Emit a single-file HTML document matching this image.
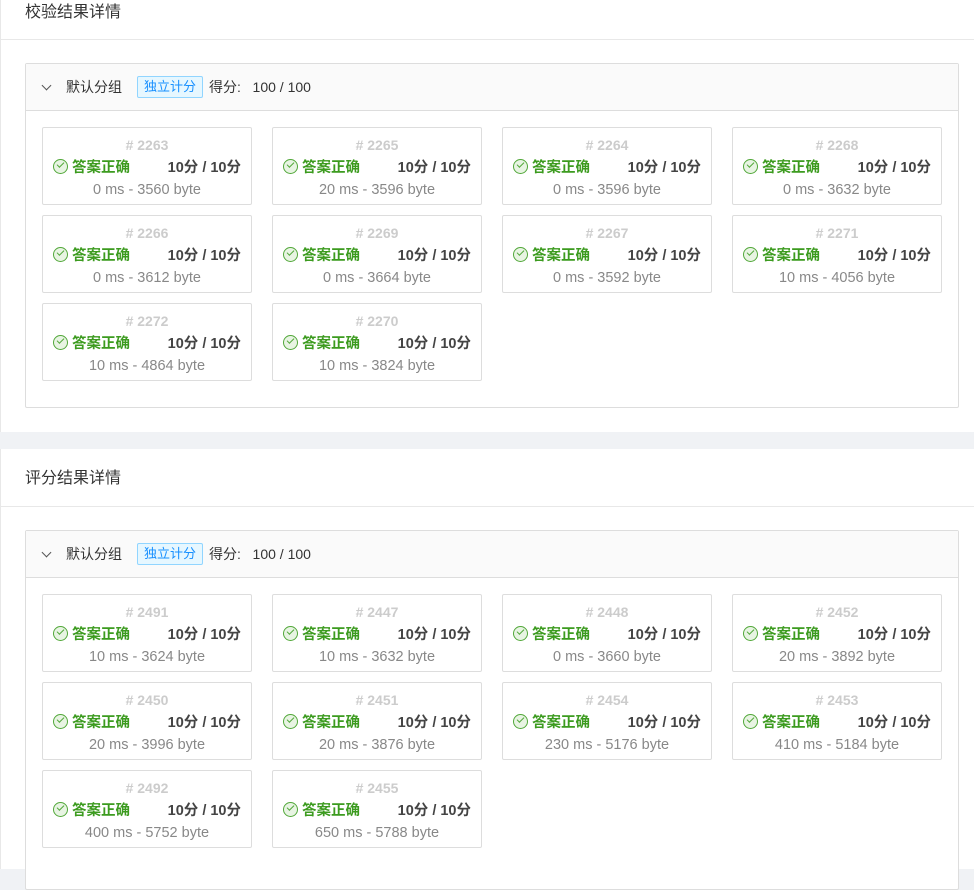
<!DOCTYPE html>
<html><head><meta charset="utf-8"><style>
*{margin:0;padding:0;box-sizing:border-box}
body{width:974px;height:854px;overflow:hidden;background:#f0f2f5;font-family:"Liberation Sans","Noto Sans CJK SC",sans-serif;position:relative}
.sec{position:absolute;left:0;width:976px;background:#fff;border-left:1px solid #e8e8e8}
.title{height:40px;border-bottom:1px solid #e8e8e8;padding-left:24px;font-size:16px;color:#333;line-height:26px}
.box{position:absolute;left:24px;width:934px;border:1px solid #ddd;border-radius:2px;background:#fff}
.hd{height:47px;background:#fafafa;border-bottom:1px solid #ddd;font-size:14px;color:#333;line-height:46px;position:relative}
.hd .arr{position:absolute;left:17px;top:18px;width:7px;height:7px;border-right:1.3px solid #555;border-bottom:1.3px solid #555;transform:rotate(45deg)}
.hd .g{position:absolute;left:40px}
.hd .tag{position:absolute;left:111px;top:12px;height:22px;line-height:20px;padding:0 6px;border:1px solid #91d5ff;background:#e6f7ff;color:#1890ff;font-size:13px;border-radius:2px}
.hd .s{position:absolute;left:183px}
.c{position:absolute;width:210px;height:78px;border:1px solid #ddd;border-radius:2px;text-align:center}
.c .id{position:absolute;top:9px;left:0;right:0;font-size:14px;font-weight:bold;color:#ccc}
.c .st{position:absolute;top:28px;left:10px;font-size:14.5px;font-weight:bold;color:#3c9b1f;padding-left:19px}
.c .st:before{content:"";position:absolute;left:0;top:3px;width:13px;height:13px;border:1px solid #52a83a;border-radius:50%;background:#e8f4e3}
.c .st:after{content:"";position:absolute;left:4px;top:6px;width:6px;height:3px;border-left:1px solid #52a83a;border-bottom:1px solid #52a83a;transform:rotate(-45deg)}
.c .sc{position:absolute;top:28px;right:10px;font-size:14.5px;font-weight:bold;color:#444}
.c .t{position:absolute;top:54px;left:0;right:0;font-size:14.5px;color:#888}
</style></head><body>

<div class="sec" style="top:0;height:432px">
<div class="title">校验结果详情</div>
<div class="box" style="top:63px;height:345px">
<div class="hd"><span class="arr"></span><span class="g">默认分组</span><span class="tag">独立计分</span><span class="s">得分:&nbsp;&nbsp; 100 / 100</span></div>
<div class="c" style="left:16px;top:63px"><div class="id"># 2263</div><div class="st">答案正确</div><div class="sc">10分 / 10分</div><div class="t">0 ms - 3560 byte</div></div>
<div class="c" style="left:246px;top:63px"><div class="id"># 2265</div><div class="st">答案正确</div><div class="sc">10分 / 10分</div><div class="t">20 ms - 3596 byte</div></div>
<div class="c" style="left:476px;top:63px"><div class="id"># 2264</div><div class="st">答案正确</div><div class="sc">10分 / 10分</div><div class="t">0 ms - 3596 byte</div></div>
<div class="c" style="left:706px;top:63px"><div class="id"># 2268</div><div class="st">答案正确</div><div class="sc">10分 / 10分</div><div class="t">0 ms - 3632 byte</div></div>
<div class="c" style="left:16px;top:151px"><div class="id"># 2266</div><div class="st">答案正确</div><div class="sc">10分 / 10分</div><div class="t">0 ms - 3612 byte</div></div>
<div class="c" style="left:246px;top:151px"><div class="id"># 2269</div><div class="st">答案正确</div><div class="sc">10分 / 10分</div><div class="t">0 ms - 3664 byte</div></div>
<div class="c" style="left:476px;top:151px"><div class="id"># 2267</div><div class="st">答案正确</div><div class="sc">10分 / 10分</div><div class="t">0 ms - 3592 byte</div></div>
<div class="c" style="left:706px;top:151px"><div class="id"># 2271</div><div class="st">答案正确</div><div class="sc">10分 / 10分</div><div class="t">10 ms - 4056 byte</div></div>
<div class="c" style="left:16px;top:239px"><div class="id"># 2272</div><div class="st">答案正确</div><div class="sc">10分 / 10分</div><div class="t">10 ms - 4864 byte</div></div>
<div class="c" style="left:246px;top:239px"><div class="id"># 2270</div><div class="st">答案正确</div><div class="sc">10分 / 10分</div><div class="t">10 ms - 3824 byte</div></div>
</div></div>

<div class="sec" style="top:449px;height:420px">
<div class="title" style="padding-top:17px;height:58px">评分结果详情</div>
<div class="box" style="top:81px;height:360px">
<div class="hd"><span class="arr"></span><span class="g">默认分组</span><span class="tag">独立计分</span><span class="s">得分:&nbsp;&nbsp; 100 / 100</span></div>
<div class="c" style="left:16px;top:63px"><div class="id"># 2491</div><div class="st">答案正确</div><div class="sc">10分 / 10分</div><div class="t">10 ms - 3624 byte</div></div>
<div class="c" style="left:246px;top:63px"><div class="id"># 2447</div><div class="st">答案正确</div><div class="sc">10分 / 10分</div><div class="t">10 ms - 3632 byte</div></div>
<div class="c" style="left:476px;top:63px"><div class="id"># 2448</div><div class="st">答案正确</div><div class="sc">10分 / 10分</div><div class="t">0 ms - 3660 byte</div></div>
<div class="c" style="left:706px;top:63px"><div class="id"># 2452</div><div class="st">答案正确</div><div class="sc">10分 / 10分</div><div class="t">20 ms - 3892 byte</div></div>
<div class="c" style="left:16px;top:151px"><div class="id"># 2450</div><div class="st">答案正确</div><div class="sc">10分 / 10分</div><div class="t">20 ms - 3996 byte</div></div>
<div class="c" style="left:246px;top:151px"><div class="id"># 2451</div><div class="st">答案正确</div><div class="sc">10分 / 10分</div><div class="t">20 ms - 3876 byte</div></div>
<div class="c" style="left:476px;top:151px"><div class="id"># 2454</div><div class="st">答案正确</div><div class="sc">10分 / 10分</div><div class="t">230 ms - 5176 byte</div></div>
<div class="c" style="left:706px;top:151px"><div class="id"># 2453</div><div class="st">答案正确</div><div class="sc">10分 / 10分</div><div class="t">410 ms - 5184 byte</div></div>
<div class="c" style="left:16px;top:239px"><div class="id"># 2492</div><div class="st">答案正确</div><div class="sc">10分 / 10分</div><div class="t">400 ms - 5752 byte</div></div>
<div class="c" style="left:246px;top:239px"><div class="id"># 2455</div><div class="st">答案正确</div><div class="sc">10分 / 10分</div><div class="t">650 ms - 5788 byte</div></div>
</div></div>
</body></html>
